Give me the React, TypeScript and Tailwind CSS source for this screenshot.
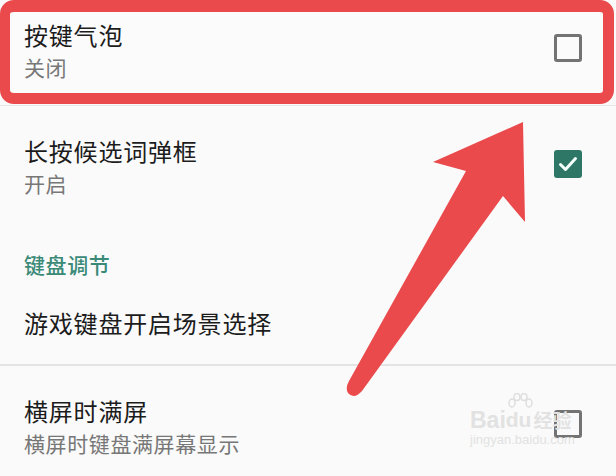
const FONT = "font-['Noto_Sans_CJK_SC','Noto_Sans',sans-serif]";

function Checkbox({ checked }: { checked: boolean }) {
  if (checked) {
    return (
      <div className="mt-[14px] flex h-[28px] w-[28px] shrink-0 items-center justify-center rounded-[3px] bg-[#2e7666]">
        <svg width="22" height="22" viewBox="0 0 22 22" fill="none">
          <path d="M3.5 11.5 L8.5 16.5 L18.5 5.5" stroke="#f4fffb" strokeWidth="3" strokeLinecap="round" strokeLinejoin="round" />
        </svg>
      </div>
    );
  }
  return <div className="mt-[14px] h-[28px] w-[28px] shrink-0 rounded-[3px] border-[3px] border-[#737373]" />;
}

function SettingRow({
  title,
  summary,
  checked,
  className,
}: {
  title: string;
  summary: string;
  checked: boolean;
  className?: string;
}) {
  return (
    <div className={"flex items-start justify-between " + (className ?? "")}>
      <div>
        <div className="text-[24px] leading-[30px] tracking-[0.8px] text-[#1c1c1c]">{title}</div>
        <div className="mt-[3px] text-[21px] leading-[28px] tracking-[0.6px] text-[#777]">{summary}</div>
      </div>
      <Checkbox checked={checked} />
    </div>
  );
}

function Arrow() {
  return (
    <svg className="pointer-events-none absolute left-0 top-0" width="616" height="476" viewBox="0 0 616 476">
      <path
        d="M523 122 L525 222 L503 196 L362 391 Q354 400 348 393 Q345 388 349 381 L466 171 L433 162 Z"
        fill="#ea4a4c"
      />
    </svg>
  );
}

function Watermark() {
  return (
    <div className="pointer-events-none absolute left-[470px] top-[408px] flex flex-col font-['Liberation_Sans',sans-serif] text-[#e2e2e2]">
      <div className="flex items-end">
        <span className="text-[23px] font-bold leading-[24px]">Bai</span>
        <span className="relative text-[21px] font-bold leading-[24px]">
          <svg className="absolute -top-[15px] left-[0px]" width="28" height="20" viewBox="0 0 28 20" fill="none" stroke="#dedede" strokeWidth="1.5">
            <ellipse cx="6" cy="10" rx="3" ry="4" />
            <ellipse cx="11" cy="4" rx="3" ry="3.5" />
            <ellipse cx="18" cy="4" rx="3" ry="3.5" />
            <ellipse cx="23" cy="10" rx="3" ry="4" />
          </svg>
          du
        </span>
        <span className="ml-[2px] font-['Noto_Sans_CJK_SC',sans-serif] text-[19px] font-bold leading-[24px]">经验</span>
      </div>
      <div className="text-[13px] leading-[16px]">jingyan.baidu.com</div>
    </div>
  );
}

export default function App() {
  return (
    <div className={"relative h-[476px] w-[616px] overflow-hidden bg-[#fafafa] " + FONT}>
      <div className="h-[104px] w-[614px] rounded-[14px] border-[11px] border-l-[10px] border-t-[12px] border-[#ea4a4c] bg-[#fbfbfb]">
        <SettingRow title="按键气泡" summary="关闭" checked={false} className="pl-[14px] pr-[21px] pt-[8px]" />
      </div>
      <div className="mt-px h-px bg-[#e6e6e6]" />

      <SettingRow title="长按候选词弹框" summary="开启" checked className="pl-[24px] pr-[34px] pt-[30px]" />

      <div className="mt-[53px] pl-[24px] text-[21px] font-medium leading-[28px] tracking-[0.6px] text-[#3b8a78]">键盘调节</div>
      <div className="mt-[30px] pl-[24px] text-[24px] leading-[30px] tracking-[0.8px] text-[#1c1c1c]">游戏键盘开启场景选择</div>

      <div className="mt-[26px] h-[2px] bg-[#e4e4e4]" />

      <SettingRow title="横屏时满屏" summary="横屏时键盘满屏幕显示" checked={false} className="pl-[24px] pr-[34px] pt-[30px]" />

      <Watermark />
      <Arrow />
    </div>
  );
}
